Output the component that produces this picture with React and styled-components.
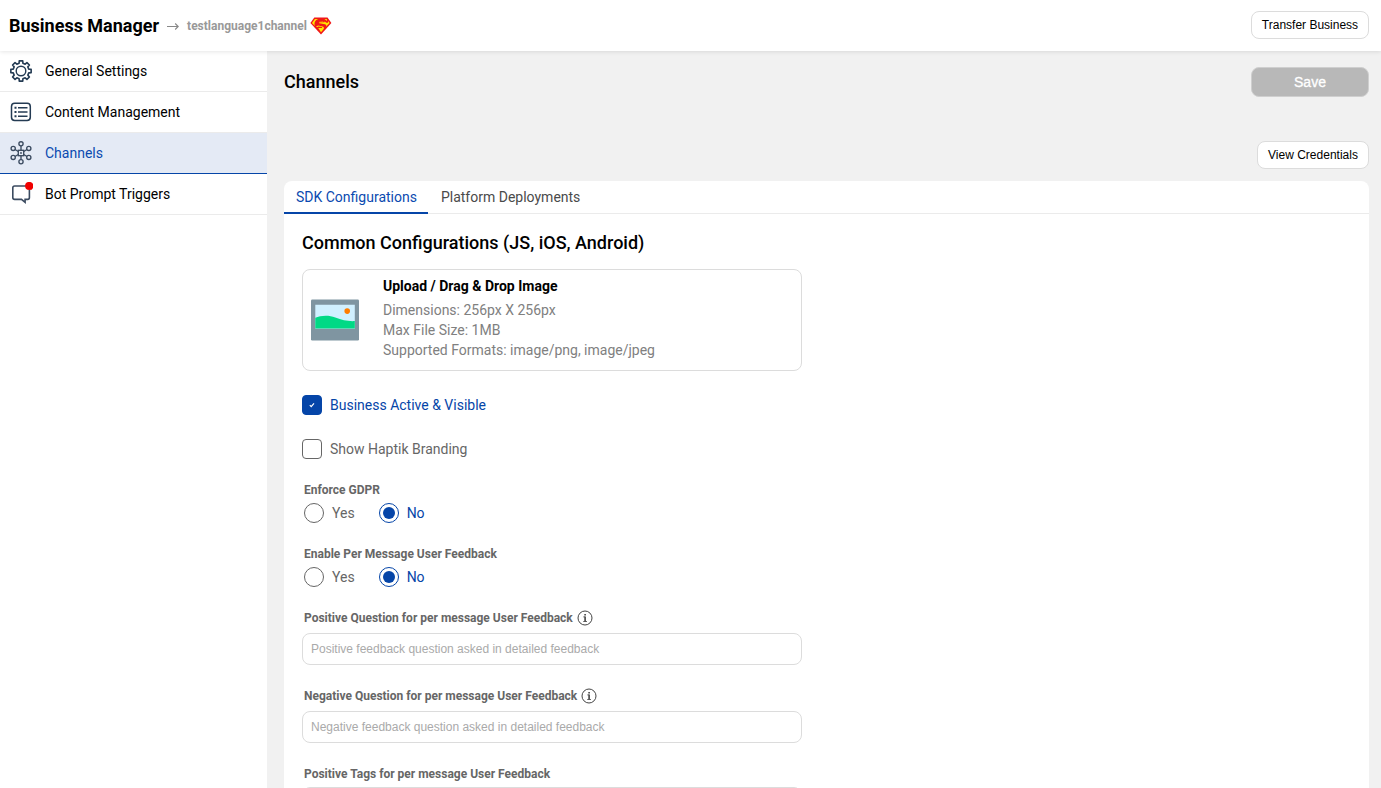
import React from "react";
import styled, { createGlobalStyle } from "styled-components";

const Global = createGlobalStyle`
  * { box-sizing: border-box; }
  html, body { margin: 0; height: 100%; overflow: hidden; }
  body { background: #f1f1f1; color: #000; font: 14px/20px Roboto, sans-serif; }
  h1, h2, h3, p { margin: 0; }
  svg { display: block; flex: none; }
`;

const Page = styled.div`
  display: flex;
  flex-direction: column;
  height: 100vh;
`;
const Header = styled.header`
  display: flex;
  align-items: center;
  flex: none;
  height: 51px;
  padding: 0 12px 0 9px;
  background: #fff;
  box-shadow: 0 1px 4px rgba(0, 0, 0, 0.1);
  position: relative;
`;
const Brand = styled.h1`
  font-size: 18px;
  font-weight: 700;
  line-height: 24px;
`;
const Business = styled.span`
  margin: 0 3px 0 8px;
  font-size: 12px;
  font-weight: 700;
  color: #999;
`;
const Arrow = styled.svg`
  margin-left: 8px;
`;
const Button = styled.button`
  display: flex;
  align-items: center;
  justify-content: center;
  width: ${(p) => p.$width}px;
  height: 28px;
  padding: 0 0 1px;
  border: 1px solid #dcdcdc;
  border-radius: 8px;
  background: #fff;
  color: #000;
  font: 12px "Liberation Sans", Arial, sans-serif;
  white-space: nowrap;
`;
const HeaderButton = styled(Button)`
  margin: 0 0 2px auto;
  padding: 0;
`;
const SaveButton = styled(Button)`
  height: 30px;
  padding: 0;
  background: #b8b8b8;
  border-color: #cfcfcf;
  color: #fff;
  font-size: 14px;
  -webkit-text-stroke: 0.3px #fff;
`;

const Body = styled.div`
  display: flex;
  flex: 1;
  min-height: 0;
`;
const Sidebar = styled.nav`
  width: 267px;
  flex: none;
  background: #fff;
`;
const NavItem = styled.a`
  display: flex;
  align-items: center;
  gap: 12px;
  height: 41px;
  padding-left: 9px;
  border-bottom: 1px solid ${(p) => (p.$active ? "#0545a8" : "#ebebeb")};
  background: ${(p) => (p.$active ? "#e4eaf5" : "#fff")};
  color: ${(p) => (p.$active ? "#0b4ab0" : "#000")};
`;
const Main = styled.main`
  flex: 1;
  display: flex;
  flex-direction: column;
  padding: 0 12px 0 17px;
  overflow: hidden;
`;
const TitleRow = styled.div`
  display: flex;
  justify-content: space-between;
  align-items: center;
  margin-top: 16px;
  height: 30px;
`;
const Title = styled.h2`
  font-size: 18px;
  font-weight: 500;
  line-height: 24px;
`;
const ActionRow = styled.div`
  display: flex;
  justify-content: flex-end;
  margin: 44px 0 12px;
`;
const Panel = styled.section`
  flex: 1;
  background: #fff;
  border-radius: 8px 8px 0 0;
  overflow: hidden;
`;
const Tabs = styled.div`
  display: flex;
  height: 33px;
  box-shadow: inset 0 -1px #ebebeb;
`;
const Tab = styled.div`
  padding: 6px ${(p) => (p.$active ? 11 : 13)}px 5px ${(p) => (p.$active ? 12 : 13)}px;
  border-bottom: 2px solid ${(p) => (p.$active ? "#0545a8" : "transparent")};
  color: ${(p) => (p.$active ? "#0b4ab0" : "#4a4a4a")};
`;
const Form = styled.form`
  width: 518px;
  padding: 17px 0 0 18px;
`;
const SectionTitle = styled(Title)`
  margin-bottom: 14px;
  white-space: nowrap;
`;
const UploadBox = styled.div`
  display: flex;
  align-items: center;
  gap: 24px;
  height: 102px;
  padding-left: 8px;
  border: 1px solid #dcdcdc;
  border-radius: 8px;
`;
const UploadText = styled.div`
  padding-bottom: 4px;
  color: #808080;
`;
const UploadTitle = styled.h3`
  margin-bottom: 4px;
  color: #000;
  font-size: 14px;
  font-weight: 700;
  line-height: 20px;
`;
const CheckRow = styled.label`
  display: flex;
  align-items: center;
  gap: 8px;
  margin-top: 24px;
  color: ${(p) => (p.$checked ? "#0545a8" : "#666")};
`;
const CheckBox = styled.span`
  display: flex;
  align-items: center;
  justify-content: center;
  width: 20px;
  height: 20px;
  border-radius: 4px;
  border: 1px solid ${(p) => (p.$checked ? "#0545a8" : "#666")};
  background: ${(p) => (p.$checked ? "#0545a8" : "#fff")};
`;
const Field = styled.div`
  margin-top: 23px;
`;
const Label = styled.div`
  display: flex;
  align-items: center;
  gap: 4px;
  height: 16px;
  padding-left: 2px;
  font-size: 12px;
  font-weight: 700;
  line-height: 16px;
  color: #666;
  white-space: nowrap;
`;
const Radios = styled.div`
  display: flex;
  gap: 24px;
  margin-top: 5px;
  padding-left: 2px;
`;
const RadioItem = styled.label`
  display: flex;
  align-items: center;
  gap: 8px;
  color: ${(p) => (p.$checked ? "#0545a8" : "#666")};
`;
const RadioDot = styled.span`
  width: 20px;
  height: 20px;
  border-radius: 50%;
  border: 1px solid ${(p) => (p.$checked ? "#0545a8" : "#666")};
  padding: 3px;
  background: ${(p) => (p.$checked ? "#0545a8" : "#fff")} content-box;
`;
const Input = styled.input`
  display: block;
  width: 500px;
  height: 32px;
  margin-top: ${(p) => (p.$tight ? 5 : 7)}px;
  padding: 0 8px 1px;
  border: 1px solid #dcdcdc;
  border-radius: 8px;
  outline: none;
  font: 12px "Liberation Sans", Arial, sans-serif;
  &::placeholder { color: #aaa; opacity: 1; }
`;

const gearPath = (() => {
  const pts = [];
  for (let i = 0; i < 8; i++) {
    const a = (i * Math.PI) / 4;
    [[-0.24, 8], [-0.17, 10.3], [0.17, 10.3], [0.24, 8]].forEach(([d, r]) => {
      pts.push(`${(12 + r * Math.sin(a + d)).toFixed(2)} ${(12 - r * Math.cos(a + d)).toFixed(2)}`);
    });
  }
  return `M${pts.join("L")}Z`;
})();

const GearIcon = () => (
  <svg width="24" height="24" viewBox="0 0 24 24" fill="none" stroke="#243b53" strokeWidth="1.6" strokeLinejoin="round">
    <path d={gearPath} />
    <circle cx="12" cy="12" r="4.8" strokeWidth="1.4" />
  </svg>
);
const ListIcon = () => (
  <svg width="24" height="24" viewBox="0 0 24 24" fill="none" stroke="#243b53" strokeWidth="1.5">
    <rect x="2.5" y="3.3" width="18.8" height="17.2" rx="3.2" />
    <path d="M9 7.8h9.5M9 12h9.5M9 16.2h9.5" />
    <path d="M5.5 7.8h2M5.5 12h2M5.5 16.2h2" strokeWidth="2" />
  </svg>
);
const HubIcon = () => (
  <svg width="24" height="24" viewBox="0 0 24 24" fill="none" stroke="#3b4b60" strokeWidth="1.35">
    <rect x="9.3" y="9.3" width="5.4" height="5.4" />
    <path d="M12 5v4.3M12 14.7v3.8M6 8.5l3.3 2M18 8.5l-3.3 2M6 15.5l3.3-2M18 15.5l-3.3-2" />
    <circle cx="12" cy="2.8" r="2.1" />
    <circle cx="12" cy="20.7" r="2.1" />
    <circle cx="4.2" cy="7.4" r="2.1" />
    <circle cx="19.8" cy="7.4" r="2.1" />
    <circle cx="4.2" cy="16.4" r="2.1" />
    <circle cx="19.8" cy="16.4" r="2.1" />
    <circle cx="12" cy="12" r=".9" fill="#3b4b60" stroke="none" />
  </svg>
);
const ChatIcon = () => (
  <svg width="24" height="24" viewBox="0 0 24 24" fill="none">
    <path d="M17 4H5.6Q3.8 4 3.8 5.8v9.8q0 1.8 1.8 1.8h6.9l3.6 3v-3h2.7q1.6 0 1.6-1.8V8" stroke="#3b4b60" strokeWidth="1.6" />
    <circle cx="20.2" cy="4" r="4.1" fill="#f00000" />
  </svg>
);
const ShieldLogo = () => (
  <svg width="22" height="18" viewBox="0 0 22 18">
    <path d="M4.3.5h13.2L21.4 6 11 17.4.4 6Z" fill="#f01818" />
    <path d="M4.9 2 2 5.9l2.9 3C3.8 5.4 5.4 3 8.2 2Z" fill="#ffe600" />
    <path d="M14.5 1.9h2.3l.3 2.3-1-.9ZM8.7 4.8c1.5-.8 4.5-.7 6 .5h-4.9c-1 .1-1.2.7-.4.9l5.6 1c1.4.4 1.5 1.5.9 2.6l3.7-3.9-1.3-1.9-.4 1.8h-1.5l-1.4-1.1-3.7-.3Z" fill="#ffe600" />
    <path d="M7.2 10.3 8.4 9.5l3.3.6c.8.4.5 1-.2 1H8.2L11 15.2l1.9-2.2c1.4-1.3 1.6-3.1-.3-3.5L8.1 8.6 6 9.5Z" fill="#ffe600" />
  </svg>
);
const PictureIcon = () => (
  <svg width="48" height="42" viewBox="0 0 48 42">
    <rect y=".5" width="48" height="41" rx="1.2" fill="#7f95a1" />
    <path d="M4.3 5.7h39.5v24H4.3Z" fill="#d0f0ff" />
    <path d="M4.3 18.8c5-2 13-3 20-.2 7 2.6 12 3.8 19.5 3.5v7.3H4.3Z" fill="#00d985" />
    <circle cx="36.2" cy="12.1" r="2.8" fill="#ff7d00" />
  </svg>
);
const CheckIcon = () => (
  <svg width="8" height="8" viewBox="0 0 8 8" fill="none" stroke="#fff" strokeWidth="1.2">
    <path d="m1.8 4.2 1.4 1.4 2.8-3.2" />
  </svg>
);
const InfoIcon = () => (
  <svg width="16" height="16" viewBox="0 0 16 16" fill="none" stroke="#444" strokeWidth="1">
    <circle cx="8" cy="8" r="7" />
    <path d="M6.3 6.9h1.8M6.2 11.5h3.8" strokeWidth=".8" />
    <path d="M8.1 6.5v5M8.1 4v1.5" strokeWidth="1.6" />
  </svg>
);

const NAV = [
  ["General Settings", GearIcon],
  ["Content Management", ListIcon],
  ["Channels", HubIcon],
  ["Bot Prompt Triggers", ChatIcon],
];

const YesNo = ({ label }) => (
  <Field>
    <Label>{label}</Label>
    <Radios>
      <RadioItem><RadioDot />Yes</RadioItem>
      <RadioItem $checked><RadioDot $checked />No</RadioItem>
    </Radios>
  </Field>
);
const TextField = ({ label, info, placeholder }) => (
  <Field>
    <Label>{label}{info && <InfoIcon />}</Label>
    <Input $tight={!info} placeholder={placeholder} />
  </Field>
);

export default function App() {
  return (
    <Page>
      <Global />
      <Header>
        <Brand>Business Manager</Brand>
        <Arrow width="12" height="10" viewBox="0 0 12 10" fill="none" stroke="#888" strokeWidth="1.1">
          <path d="M0 5.5h11.3M8.2 2.5l3 3-3 3" />
        </Arrow>
        <Business>testlanguage1channel</Business>
        <ShieldLogo />
        <HeaderButton $width={118}>Transfer Business</HeaderButton>
      </Header>
      <Body>
        <Sidebar>
          {NAV.map(([name, Icon]) => (
            <NavItem key={name} $active={name === "Channels"}>
              <Icon />
              {name}
            </NavItem>
          ))}
        </Sidebar>
        <Main>
          <TitleRow>
            <Title>Channels</Title>
            <SaveButton $width={118}>Save</SaveButton>
          </TitleRow>
          <ActionRow>
            <Button $width={112}>View Credentials</Button>
          </ActionRow>
          <Panel>
            <Tabs>
              <Tab $active>SDK Configurations</Tab>
              <Tab>Platform Deployments</Tab>
            </Tabs>
            <Form>
              <SectionTitle>Common Configurations (JS, iOS, Android)</SectionTitle>
              <UploadBox>
                <PictureIcon />
                <UploadText>
                  <UploadTitle>Upload / Drag &amp; Drop Image</UploadTitle>
                  <p>Dimensions: 256px X 256px</p>
                  <p>Max File Size: 1MB</p>
                  <p>Supported Formats: image/png, image/jpeg</p>
                </UploadText>
              </UploadBox>
              <CheckRow $checked><CheckBox $checked><CheckIcon /></CheckBox>Business Active &amp; Visible</CheckRow>
              <CheckRow><CheckBox />Show Haptik Branding</CheckRow>
              <YesNo label="Enforce GDPR" />
              <YesNo label="Enable Per Message User Feedback" />
              <TextField info label="Positive Question for per message User Feedback" placeholder="Positive feedback question asked in detailed feedback" />
              <TextField info label="Negative Question for per message User Feedback" placeholder="Negative feedback question asked in detailed feedback" />
              <TextField label="Positive Tags for per message User Feedback" />
            </Form>
          </Panel>
        </Main>
      </Body>
    </Page>
  );
}
